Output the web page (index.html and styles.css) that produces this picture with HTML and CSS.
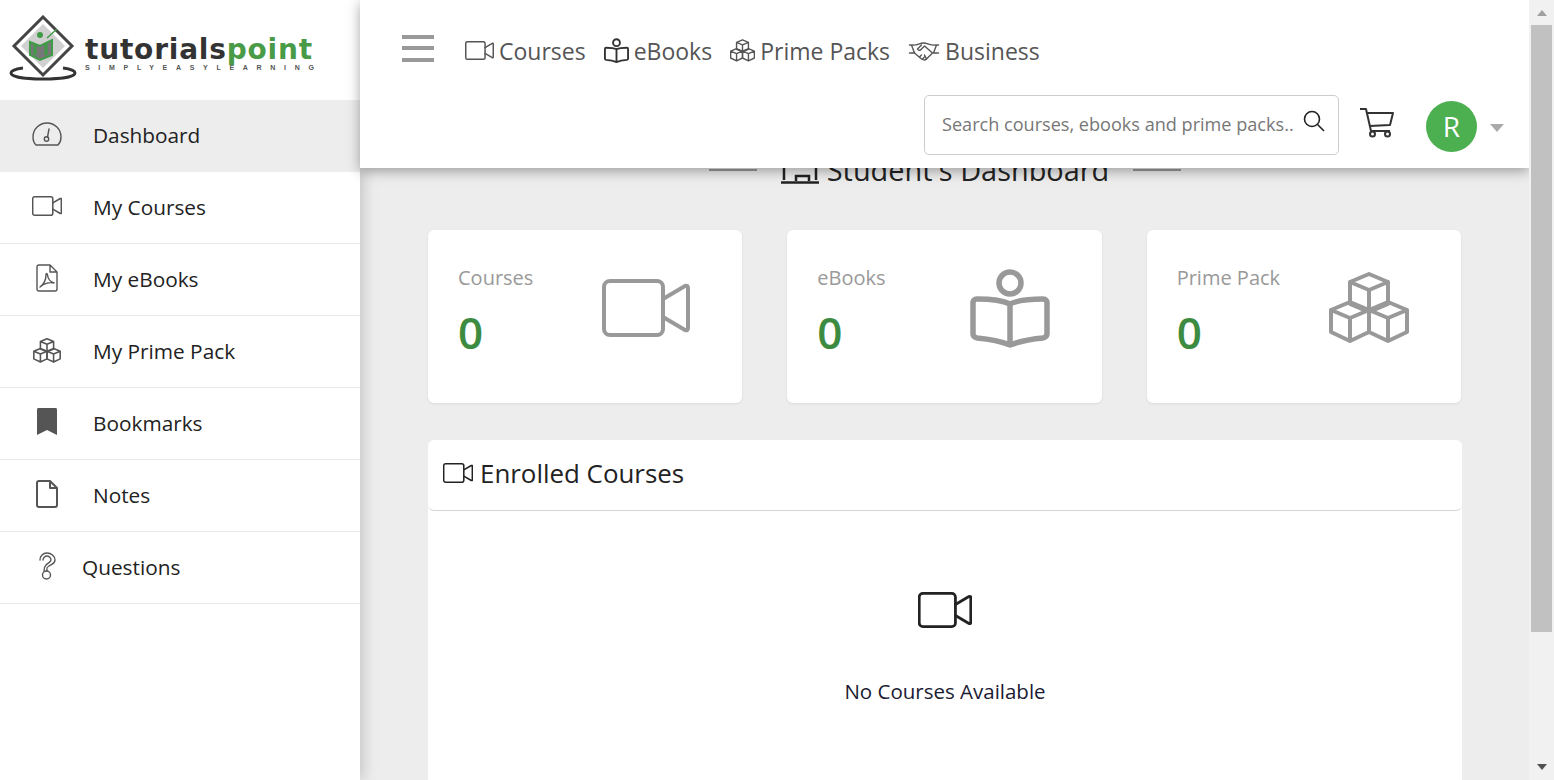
FILE: index.html
```html
<!DOCTYPE html>
<html lang="en">
<head>
    <meta charset="UTF-8">
    <title>Student's Dashboard - Tutorialspoint</title>
    <link rel="stylesheet" href="styles.css">
</head>
<body>
    <svg class="defs" width="0" height="0">
        <symbol id="i-video" viewBox="0 0 88 58">
            <rect x="2" y="2" width="59" height="54" rx="6"/>
            <path d="M61 20 83 7Q86 6 86 9V49Q86 52 83 51L61 38"/>
        </symbol>
        <symbol id="i-reader" viewBox="0 0 80 80">
            <circle cx="40" cy="15" r="11"/>
            <path d="M40 36C32 32 16 31 7 31 4 31 3 33 3 35V66C3 68 4 69 7 70 18 71 30 73 40 77 50 73 62 71 73 70 76 69 77 68 77 66V35C77 33 76 31 73 31 64 31 48 32 40 36ZM40 36V77"/>
        </symbol>
        <symbol id="i-boxes" viewBox="0 0 80 72">
            <path d="M40 2 59 10V32L40 40 21 32V10ZM21 10 40 18 59 10M40 18V40"/>
            <path d="M21 30 40 38V60L21 69 2 60V38ZM2 38 21 46 40 38M21 46V69"/>
            <path d="M59 30 78 38V60L59 69 40 60V38ZM40 38 59 46 78 38M59 46V69"/>
        </symbol>
    </svg>

    <div class="page">
        <aside class="sidebar">
            <a class="logo" href="#">
                <svg class="logo-mark" viewBox="0 0 70 66">
                    <path class="logo-ring" d="M14 53C6 54 2 56 2 58 2 62 16 64 34 64S66 62 66 58C66 56 62 54 54 53"/>
                    <path class="logo-diamond" d="M34 2 63 31 34 60 5 31Z"/>
                    <path class="logo-inner" d="M34 9 56 31 34 53 12 31Z"/>
                    <circle class="logo-head" cx="31" cy="20" r="3"/>
                    <path class="logo-book" d="M21 27 31 31 43 25V40L31 45 21 40Z"/>
                    <path class="logo-bar" d="M26 29V40M37 28V40"/>
                    <path class="logo-tick" d="M38 23 48 14"/>
                </svg>
                <span class="logo-text">
                    <span class="logo-name">tutorials<b>point</b></span>
                    <span class="logo-tag">SIMPLYEASYLEARNING</span>
                </span>
            </a>
            <nav class="side-nav">
                <a class="side-link active" href="#">
                    <span class="side-icon">
                        <svg class="stroke-icon line" width="30" height="24" viewBox="0 0 30 24"><path d="M4 23H26Q29 20 29 15A14 14 0 0 0 1 15Q1 20 4 23Z"/><circle cx="14.500" cy="17" r="2.200"/><path d="M15.500 15 17 7"/></svg>
                    </span>
                    Dashboard
                </a>
                <a class="side-link" href="#">
                    <span class="side-icon"><svg class="stroke-icon" width="30" height="20"><use href="#i-video"/></svg></span>
                    My Courses
                </a>
                <a class="side-link" href="#">
                    <span class="side-icon">
                        <svg class="stroke-icon line" width="22" height="28" viewBox="0 0 22 28"><path d="M3 1H14L21 8V25Q21 27 19 27H3Q1 27 1 25V3Q1 1 3 1ZM14 1V8H21"/><path d="M4 23C8 20 10 15 10 11 10 9 11 9 11.500 11 12 15 15 18 18 19 14 18 8 19 4 23Z"/></svg>
                    </span>
                    My eBooks
                </a>
                <a class="side-link" href="#">
                    <span class="side-icon"><svg class="stroke-icon" width="28" height="25"><use href="#i-boxes"/></svg></span>
                    My Prime Pack
                </a>
                <a class="side-link" href="#">
                    <span class="side-icon">
                        <svg class="fill-icon" width="22" height="28" viewBox="0 0 22 28"><path d="M2 0H20Q21 0 21 2V27L11 22 1 27V2Q1 0 2 0Z"/></svg>
                    </span>
                    Bookmarks
                </a>
                <a class="side-link" href="#">
                    <span class="side-icon">
                        <svg class="stroke-icon thick" width="22" height="28" viewBox="0 0 22 28"><path d="M3 1H14L21 8V25Q21 27 19 27H3Q1 27 1 25V3Q1 1 3 1ZM14 1V8H21"/></svg>
                    </span>
                    Notes
                </a>
                <a class="side-link short" href="#">
                    <span class="side-icon">
                        <svg class="stroke-icon line" width="20" height="28" viewBox="0 0 20 28"><path d="M3 8C3 4 6 1 10 1S18 4 18 8 15 12 12 14 10 16 10 19"/><path d="M6 8C6 6 8 4 10 4S14 6 14 8 11 11 9 13 7 16 7 19"/><circle cx="9.500" cy="23" r="4"/></svg>
                    </span>
                    Questions
                </a>
            </nav>
        </aside>

        <div class="main">
            <header class="topbar">
                <div class="top-row">
                    <button class="burger" type="button"><span></span><span></span><span></span></button>
                    <a class="top-link" href="#"><svg class="stroke-icon" width="29" height="19"><use href="#i-video"/></svg>Courses</a>
                    <a class="top-link" href="#"><svg class="stroke-icon dark" width="25" height="25"><use href="#i-reader"/></svg>eBooks</a>
                    <a class="top-link" href="#"><svg class="stroke-icon" width="25" height="23"><use href="#i-boxes"/></svg>Prime Packs</a>
                    <a class="top-link" href="#">
                        <svg class="stroke-icon line" width="32" height="20" viewBox="0 0 31 20"><path d="M1 4H3L6 12H1M30 4H28L25 12H30"/><path d="M4 4C8 5 11 2 15 2 19 2 23 5 27 4M6 12 13 18Q16 20 18 18L24 12 16 5 12 9Q10 10 9 8L13 4"/><path d="M11 16 13 14M14 18 16 16M18 18 16 14"/></svg>
                        Business
                    </a>
                </div>
                <div class="tool-row">
                    <div class="search">
                        <input class="search-input" type="text" placeholder="Search courses, ebooks and prime packs...">
                        <svg class="search-icon" width="22" height="22" viewBox="0 0 22 22"><circle cx="9" cy="9" r="7.500"/><path d="M14.500 14.500 21 21"/></svg>
                    </div>
                    <svg class="cart" width="36" height="32" viewBox="0 0 36 32"><path d="M1 2H7L12 24H31M8 6H34L31 18 10.500 19"/><circle cx="13.500" cy="27" r="2.500"/><circle cx="28.500" cy="27" r="2.500"/></svg>
                    <div class="avatar">R</div>
                    <span class="caret"></span>
                </div>
            </header>

            <div class="content">
                <div class="title-row">
                    <span class="title-line"></span>
                    <h1 class="title">
                        <svg class="laptop" width="38" height="32" viewBox="0 0 38 32"><path d="M3 2V26M35 2V26M0 28.500H38M15 27V22H28V27"/></svg>
                        Student's Dashboard
                    </h1>
                    <span class="title-line"></span>
                </div>

                <div class="stats">
                    <div class="stat-card">
                        <div>
                            <div class="stat-label">Courses</div>
                            <div class="stat-num">0</div>
                        </div>
                        <svg class="stat-icon" width="88" height="58"><use href="#i-video"/></svg>
                    </div>
                    <div class="stat-card">
                        <div>
                            <div class="stat-label">eBooks</div>
                            <div class="stat-num">0</div>
                        </div>
                        <svg class="stat-icon heavy" width="80" height="80"><use href="#i-reader"/></svg>
                    </div>
                    <div class="stat-card">
                        <div>
                            <div class="stat-label">Prime Pack</div>
                            <div class="stat-num">0</div>
                        </div>
                        <svg class="stat-icon" width="80" height="72"><use href="#i-boxes"/></svg>
                    </div>
                </div>

                <section class="panel">
                    <div class="panel-head">
                        <svg class="stroke-icon ink" width="30" height="20"><use href="#i-video"/></svg>
                        Enrolled Courses
                    </div>
                    <div class="panel-empty">
                        <svg class="stroke-icon ink" width="54" height="36"><use href="#i-video"/></svg>
                        <p>No Courses Available</p>
                    </div>
                </section>
            </div>
        </div>

        <div class="scrollbar">
            <span class="arrow up"></span>
            <div class="thumb"></div>
            <span class="arrow down"></span>
        </div>
    </div>
</body>
</html>
```

FILE: styles.css
```css
* {
    box-sizing: border-box;
}
body {
    font-family: "Open Sans", "Noto Sans", Arial, sans-serif;
    margin: 0;
    background-color: #fff;
    color: #212529;
}
a {
    color: inherit;
    text-decoration: none;
}
.defs {
    position: absolute;
}
.page {
    display: flex;
    height: 780px;
    overflow: hidden;
}

/* icons */
.stroke-icon {
    fill: none;
    stroke: #555;
    stroke-width: 4.500;
    stroke-linejoin: round;
    stroke-linecap: round;
    flex: none;
}
.line {
    stroke-width: 1.400;
}
.thick {
    stroke-width: 2;
}
.dark {
    stroke: #333;
    stroke-width: 6;
}
.ink {
    stroke: #222;
}
.fill-icon {
    fill: #555;
}

/* sidebar */
.sidebar {
    width: 360px;
    flex: none;
    background-color: #fff;
    box-shadow: 3px 0 14px rgba(0,0,0,0.18);
    position: relative;
    z-index: 1;
}
.logo {
    display: flex;
    align-items: flex-start;
    height: 100px;
    padding: 15px 0 0 9px;
}
.logo-mark {
    width: 70px;
    height: 66px;
    flex: none;
}
.logo-ring {
    fill: none;
    stroke: #333;
    stroke-width: 3;
}
.logo-diamond {
    fill: #fff;
    stroke: #444;
    stroke-width: 3;
}
.logo-inner {
    fill: #d0d0d0;
}
.logo-head {
    fill: #3f9b45;
}
.logo-book {
    fill: #777;
    stroke: #3f9b45;
    stroke-width: 2;
}
.logo-bar {
    stroke: #3f9b45;
    stroke-width: 3;
}
.logo-tick {
    stroke: #3f9b45;
    stroke-width: 1.500;
}
.logo-text {
    display: flex;
    flex-direction: column;
    margin: 20px 0 0 6px;
}
.logo-name {
    font-family: "DejaVu Sans", sans-serif;
    font-weight: 700;
    font-size: 28px;
    line-height: 29px;
    letter-spacing: 0.8px;
    color: #333;
}
.logo-name b {
    color: #4a9b47;
}
.logo-tag {
    font-family: "Liberation Sans", sans-serif;
    font-weight: 700;
    font-size: 7px;
    line-height: 8px;
    letter-spacing: 8.700px;
    color: #555;
    white-space: nowrap;
}
.side-link {
    display: flex;
    align-items: center;
    height: 72px;
    padding: 0 0 1px 93px;
    position: relative;
    font-size: 20.800px;
    color: #222;
    border-bottom: 1px solid #e8e8e8;
}
.side-link.active {
    background-color: #ededed;
    border-bottom-color: #ededed;
}
.side-link.short {
    padding-left: 82px;
}
.side-icon {
    position: absolute;
    left: 17px;
    top: 20px;
    width: 60px;
    height: 28px;
    display: flex;
    align-items: center;
    justify-content: center;
}

/* top bar */
.main {
    flex: 1;
    min-width: 0;
    background-color: #ededed;
}
.topbar {
    height: 168px;
    background-color: #fff;
    box-shadow: 0 3px 12px rgba(0,0,0,0.35);
    position: relative;
    z-index: 2;
}
.top-row {
    display: flex;
    align-items: center;
    height: 95px;
    padding: 6px 0 0 42px;
}
.burger {
    width: 32px;
    height: 27px;
    padding: 0;
    border: none;
    background: none;
    display: flex;
    flex-direction: column;
    justify-content: space-between;
    margin: 0 31px 5px 0;
}
.burger span {
    display: block;
    height: 4px;
    background-color: #999;
}
.top-link {
    display: flex;
    align-items: center;
    gap: 5px;
    font-size: 23px;
    color: #555;
    margin-right: 18px;
}
.tool-row {
    display: flex;
    align-items: center;
    padding-left: 564px;
}
.search {
    display: flex;
    align-items: flex-start;
    width: 415px;
    height: 60px;
    border: 1px solid #ccc;
    border-radius: 5px;
    padding: 14px 13px 0 17px;
}
.search-input {
    flex: 1;
    min-width: 0;
    border: none;
    outline: none;
    padding: 0;
    margin-top: 2px;
    font-family: inherit;
    font-size: 18.100px;
}
.search-input::placeholder {
    color: #777;
    opacity: 1;
}
.search-icon {
    fill: none;
    stroke: #222;
    stroke-width: 1.600;
    margin-left: 10px;
    flex: none;
}
.cart {
    fill: none;
    stroke: #333;
    stroke-width: 2;
    stroke-linejoin: round;
    margin: 0 0 4px 20px;
    flex: none;
}
.avatar {
    width: 51px;
    height: 51px;
    margin: 2px 0 0 31px;
    border-radius: 50%;
    background-color: #4caf50;
    color: #fff;
    font-size: 28px;
    display: flex;
    align-items: center;
    justify-content: center;
    flex: none;
}
.caret {
    margin-left: 13px;
    margin-top: 6px;
    border-left: 7px solid transparent;
    border-right: 7px solid transparent;
    border-top: 8px solid #aaa;
}

/* content */
.content {
    padding: 0 67px 0 68px;
    margin-top: -18px;
}
.title-row {
    display: flex;
    align-items: center;
    justify-content: center;
    gap: 24px;
    height: 39px;
}
.title-line {
    width: 48px;
    height: 2px;
    background-color: #999;
}
.title {
    margin: 0;
    font-weight: 400;
    font-size: 28.900px;
    color: #222;
    display: flex;
    align-items: center;
    gap: 8px;
}
.laptop {
    fill: none;
    stroke: #222;
    stroke-width: 2.500;
    flex: none;
}
.stats {
    display: flex;
    gap: 45px;
    margin-top: 41px;
    padding-right: 1px;
}
.stat-card {
    flex: 1;
    height: 173px;
    background-color: #fff;
    border-radius: 6px;
    box-shadow: 0 1px 3px rgba(0,0,0,0.08);
    padding: 34px 30px;
    display: flex;
    justify-content: space-between;
}
.stat-label {
    font-size: 20px;
    color: #999;
    line-height: 28px;
}
.stat-num {
    font-size: 44px;
    font-weight: 600;
    line-height: 58px;
    color: #3d8b40;
    margin-top: 11px;
}
.stat-icon {
    fill: none;
    stroke: #999;
    stroke-width: 4;
    stroke-linejoin: round;
    stroke-linecap: round;
    flex: none;
    align-self: center;
    margin: 0 22px 17px 0;
}
.heavy {
    stroke-width: 5.500;
}
.panel {
    margin-top: 37px;
    height: 400px;
    background-color: #fff;
    border-radius: 6px;
}
.panel-head {
    display: flex;
    align-items: center;
    gap: 7px;
    height: 71px;
    padding: 0 0 4px 15px;
    font-size: 25.900px;
    color: #222;
    border-bottom: 1px solid #d5d5d5;
    border-radius: 6px;
}
.panel-empty {
    display: flex;
    flex-direction: column;
    align-items: center;
    padding-top: 81px;
    color: #1b1b33;
    font-size: 20.500px;
}
.panel-empty p {
    margin: 0;
    padding-top: 49px;
}

/* page scrollbar */
.scrollbar {
    width: 25px;
    flex: none;
    background-color: #f1f1f1;
    display: flex;
    flex-direction: column;
    align-items: center;
    padding-bottom: 10px;
    position: relative;
    z-index: 3;
}
.thumb {
    width: 21px;
    height: 607px;
    margin-bottom: auto;
    background-color: #c1c1c1;
}
.arrow {
    border-left: 5.500px solid transparent;
    border-right: 5.500px solid transparent;
    flex: none;
}
.arrow.up {
    border-bottom: 6px solid #a0a0a0;
    margin: 10px 0 9px;
}
.arrow.down {
    border-top: 6px solid #505050;
}
```
